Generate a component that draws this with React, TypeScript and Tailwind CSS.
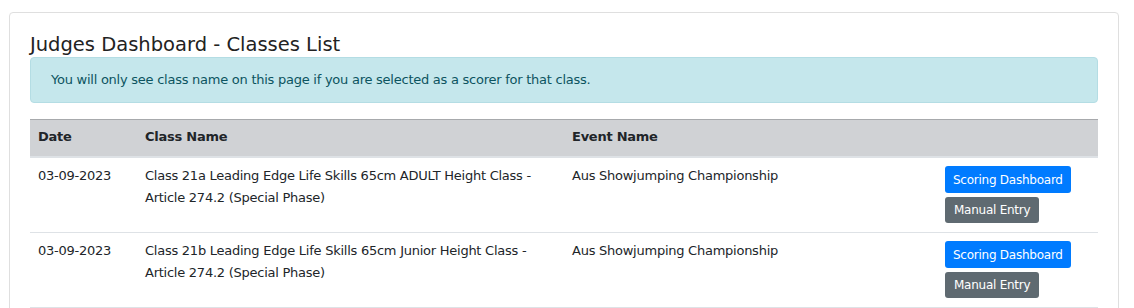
const rows = [
  {
    date: "03-09-2023",
    className: "Class 21a Leading Edge Life Skills 65cm ADULT Height Class - Article 274.2 (Special Phase)",
    event: "Aus Showjumping Championship",
  },
  {
    date: "03-09-2023",
    className: "Class 21b Leading Edge Life Skills 65cm Junior Height Class - Article 274.2 (Special Phase)",
    event: "Aus Showjumping Championship",
  },
];

export default function App() {
  return (
    <div className="min-h-screen bg-white pt-3 px-[9px] font-['DejaVu_Sans',sans-serif] text-[#212529]">
      <div className="border border-[#dfdfdf] rounded-[4px] w-[1110px] px-5 pt-[20px] pb-6">
        <h1 className="text-[19.5px] leading-[24px] font-normal text-[#222]">Judges Dashboard - Classes List</h1>
        <div className="h-[46px] flex items-center px-5 bg-[#c5e7ec] border border-[#b4dde4] rounded-[4px] text-[#0c5460] text-[13px] tracking-[-0.25px]">
          You will only see class name on this page if you are selected as a scorer for that class.
        </div>
        <table className="mt-[16px] w-[1068px] table-fixed border-collapse text-[13px] tracking-[-0.25px]">
          <thead>
            <tr className="bg-[#d0d2d5] border-t border-t-[#a7a9ac] border-b-2 border-b-[#dee2e6]">
              <th className="w-[107px] text-left font-bold px-2 pt-[7px] pb-[9px] leading-[20px]">Date</th>
              <th className="w-[427px] text-left font-bold px-2 pt-[7px] pb-[9px] leading-[20px]">Class Name</th>
              <th className="w-[373px] text-left font-bold px-2 pt-[7px] pb-[9px] leading-[20px]">Event Name</th>
              <th className="text-left px-2"></th>
            </tr>
          </thead>
          <tbody>
            {rows.map((r, i) => (
              <tr key={i} className="border-b border-[#dee2e6] align-top">
                <td className="px-2 pt-[7px] pb-2 leading-[22px]">{r.date}</td>
                <td className="pl-2 pr-[8px] pt-[7px] pb-2 leading-[22px]">{r.className}</td>
                <td className="px-2 pt-[7px] pb-2 leading-[22px]">{r.event}</td>
                <td className="px-2 pt-2 pb-[9px]">
                  <div className="flex flex-col items-start gap-[4px]">
                    <button className="h-[27px] px-2 rounded-[3px] bg-[#007bff] text-white text-[12px] tracking-[-0.25px] leading-none">Scoring Dashboard</button>
                    <button className="h-[26px] px-[9px] rounded-[3px] bg-[#5f6a71] text-white text-[12px] tracking-[-0.25px] leading-none">Manual Entry</button>
                  </div>
                </td>
              </tr>
            ))}
          </tbody>
        </table>
      </div>
    </div>
  );
}
